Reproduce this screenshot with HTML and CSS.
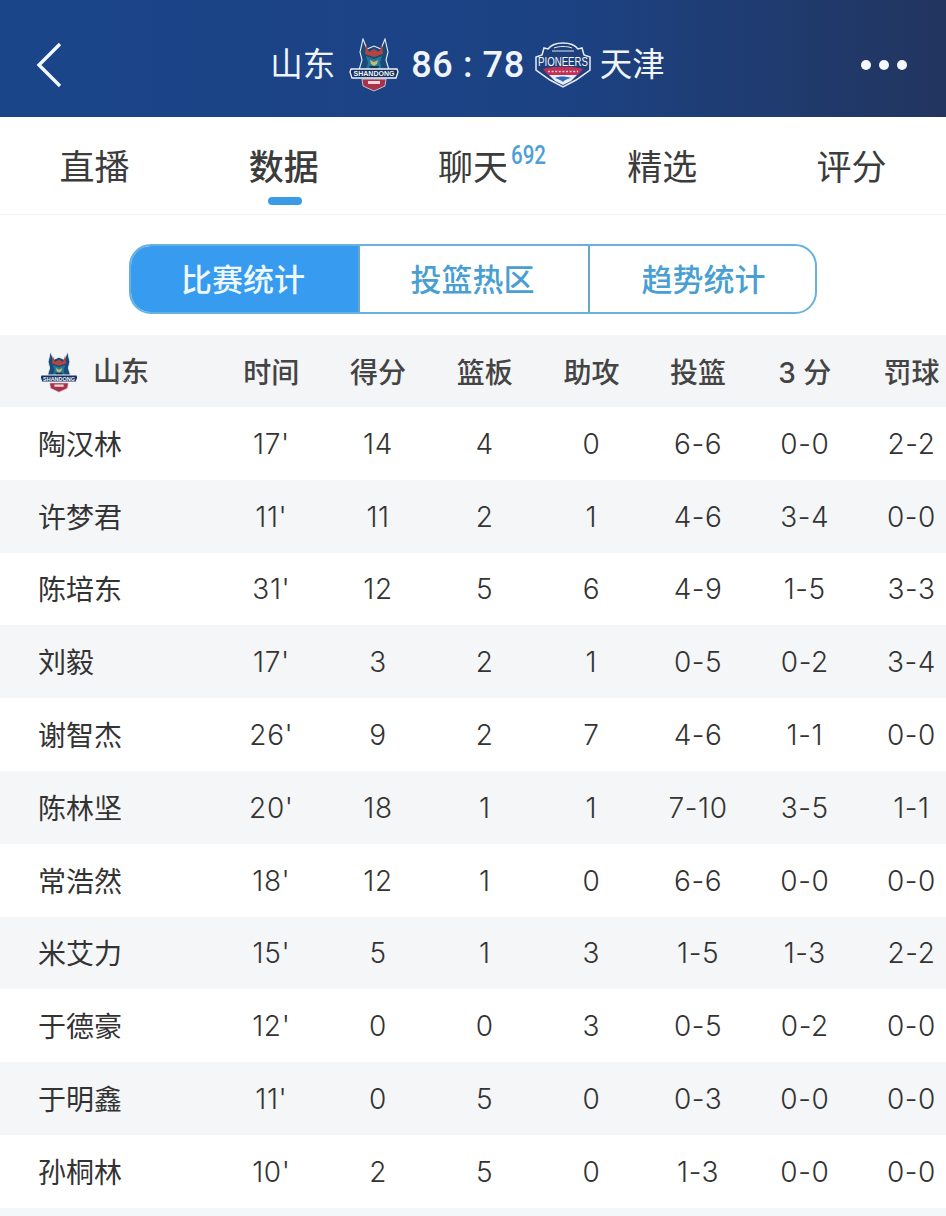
FILE: index.html
```html
<!DOCTYPE html>
<html lang="zh-CN">

<head>
    <meta charset="UTF-8">
    <title>山东 86 : 78 天津</title>
    <link rel="stylesheet" href="styles.css">
</head>

<body>
    <svg class="defs" width="0" height="0">
        <defs>
            <symbol id="shandong" viewBox="0 0 50 54">
                <path d="M14 1l4 10 7-3 7 3 4-10 3 13-2 8 3 10H10l3-10-2-8z" fill="#1a4a78" stroke="#e8eef6" stroke-width="1.1"/>
                <path d="M17 6l3 8 5-3 5 3 3-8 1 10-9 3-9-3z" fill="#b5453f"/>
                <path d="M17 18l8 3 8-3-2 7 2 7H17l2-7z" fill="#1f7a9c"/>
                <path d="M21 22l4 2 4-2-1 4-3 2-3-2z" fill="#cdb96a"/>
                <path d="M20 28h10l-2 4h-6z" fill="#16375f"/>
                <path d="M2 31h46l1 3-2 6H3l-2-6z" fill="#14305f" stroke="#f2f5fa" stroke-width="1.3"/>
                <text class="badge-text" x="25" y="38.4" font-size="7.6" textLength="41" lengthAdjust="spacingAndGlyphs">SHANDONG</text>
                <path d="M13 41h24l-1 7-11 5-11-5z" fill="#a8324a" stroke="#d9dfe9" stroke-width="0.8"/>
                <path d="M19 43h12v3H19z" fill="#efd3d8"/>
            </symbol>
            <symbol id="pioneers" viewBox="0 0 56 46">
                <path d="M28 1c7 0 12 2 15 6l4-1 2 7 6 2v13L41 38l-13 7-13-7L1 28V15l6-2 2-7 4 1c3-4 8-6 15-6z" fill="#1d3f7c" stroke="#e6edf7" stroke-width="1.5"/>
                <path d="M19 6c5-2 13-2 18 0M17 9h22" stroke="#dfe7f3" stroke-width="1" fill="none"/>
                <text class="badge-text thin" x="28" y="24" font-size="13" textLength="50" lengthAdjust="spacingAndGlyphs">PIONEERS</text>
                <path d="M8 27c8-3 32-3 40 0l-5 6H13z" fill="#c22f55"/>
                <path d="M13 29.500h30" stroke="#f0c8d4" stroke-width="1.6" stroke-dasharray="2 1.6"/>
                <path d="M14 33h28l-6 6-8 4-8-4z" fill="#e8eef7"/>
                <path d="M20 36c4-2 10-2 16 0-4 1-7 2-8 4-2-2-5-3-8-4z" fill="#2c68b4"/>
            </symbol>
        </defs>
    </svg>

    <header class="top-bar">
        <svg class="back" width="26" height="46" viewBox="0 0 26 46">
            <path d="M24 2L3 23l21 21" fill="none" stroke="#f4f7fb" stroke-width="3.4"/>
        </svg>
        <div class="match">
            <span class="team">山东</span>
            <svg class="logo-home" width="50" height="54"><use href="#shandong"/></svg>
            <span class="score">86 : 78</span>
            <svg class="logo-away" width="56" height="46"><use href="#pioneers"/></svg>
            <span class="team">天津</span>
        </div>
        <div class="more"><i></i><i></i><i></i></div>
    </header>

    <nav class="tabs">
        <a class="tab">直播</a>
        <a class="tab active">数据</a>
        <a class="tab">聊天<sup class="count">692</sup></a>
        <a class="tab">精选</a>
        <a class="tab">评分</a>
    </nav>

    <div class="switch-wrap">
        <div class="switch">
            <a class="switch-item on">比赛统计</a>
            <a class="switch-item">投篮热区</a>
            <a class="switch-item">趋势统计</a>
        </div>
    </div>

    <div class="stats">
        <div class="row head">
            <div class="name"><svg class="logo-small" width="40" height="42"><use href="#shandong"/></svg>山东</div>
            <div>时间</div><div>得分</div><div>篮板</div><div>助攻</div><div>投篮</div><div>3 分</div><div>罚球</div>
        </div>
        <div class="row">
            <div class="name">陶汉林</div>
            <div>17'</div><div>14</div><div>4</div><div>0</div><div>6-6</div><div>0-0</div><div>2-2</div>
        </div>
        <div class="row">
            <div class="name">许梦君</div>
            <div>11'</div><div>11</div><div>2</div><div>1</div><div>4-6</div><div>3-4</div><div>0-0</div>
        </div>
        <div class="row">
            <div class="name">陈培东</div>
            <div>31'</div><div>12</div><div>5</div><div>6</div><div>4-9</div><div>1-5</div><div>3-3</div>
        </div>
        <div class="row">
            <div class="name">刘毅</div>
            <div>17'</div><div>3</div><div>2</div><div>1</div><div>0-5</div><div>0-2</div><div>3-4</div>
        </div>
        <div class="row">
            <div class="name">谢智杰</div>
            <div>26'</div><div>9</div><div>2</div><div>7</div><div>4-6</div><div>1-1</div><div>0-0</div>
        </div>
        <div class="row">
            <div class="name">陈林坚</div>
            <div>20'</div><div>18</div><div>1</div><div>1</div><div>7-10</div><div>3-5</div><div>1-1</div>
        </div>
        <div class="row">
            <div class="name">常浩然</div>
            <div>18'</div><div>12</div><div>1</div><div>0</div><div>6-6</div><div>0-0</div><div>0-0</div>
        </div>
        <div class="row">
            <div class="name">米艾力</div>
            <div>15'</div><div>5</div><div>1</div><div>3</div><div>1-5</div><div>1-3</div><div>2-2</div>
        </div>
        <div class="row">
            <div class="name">于德豪</div>
            <div>12'</div><div>0</div><div>0</div><div>3</div><div>0-5</div><div>0-2</div><div>0-0</div>
        </div>
        <div class="row">
            <div class="name">于明鑫</div>
            <div>11'</div><div>0</div><div>5</div><div>0</div><div>0-3</div><div>0-0</div><div>0-0</div>
        </div>
        <div class="row">
            <div class="name">孙桐林</div>
            <div>10'</div><div>2</div><div>5</div><div>0</div><div>1-3</div><div>0-0</div><div>0-0</div>
        </div>
    </div>
</body>

</html>
```

FILE: styles.css
```css
html,
body {
    margin: 0;
    padding: 0;
    height: 1216px;
    overflow: hidden;
}

body {
    font-family: Inter, "Noto Sans CJK SC", sans-serif;
    background: white;
    color: #444;
}

.defs {
    display: block;
    height: 0;
}

.top-bar {
    height: 117px;
    background: linear-gradient(to right, #1a4589, #1c4283 60%, #22355f);
    display: flex;
    align-items: center;
    justify-content: center;
    position: relative;
    color: #f0f4f9;
}

.back {
    position: absolute;
    left: 36px;
    top: 42px;
}

.match {
    display: flex;
    align-items: center;
    margin-top: 13px;
    padding-right: 11px;
}

.team {
    font-size: 32.5px;
    line-height: 40px;
}

.logo-home {
    margin: 0 12px 0 14px;
}

.logo-away {
    margin: 0 9px 0 10px;
}

.score {
    font-family: Roboto, sans-serif;
    font-size: 36px;
    font-weight: 500;
    letter-spacing: 0.6px;
    white-space: pre;
}

.more {
    position: absolute;
    right: 39px;
    top: 60px;
    display: flex;
    gap: 8px;
}

.more i {
    width: 10px;
    height: 10px;
    border-radius: 50%;
    background: #f4f7fb;
}

.badge-text {
    font-family: "Liberation Sans", sans-serif;
    font-weight: bold;
    fill: #f4f7fb;
    text-anchor: middle;
}

.badge-text.thin {
    font-weight: normal;
}

.tabs {
    height: 97px;
    display: grid;
    grid-template-columns: repeat(5, 1fr);
    border-bottom: 1px solid #f0f1f3;
}

.tab {
    font-size: 35px;
    line-height: 100px;
    height: 97px;
    text-align: center;
    color: #3c3c3c;
    position: relative;
}

.tab.active {
    font-weight: 500;
}

.tab.active::after {
    content: "";
    position: absolute;
    left: 79px;
    bottom: 9px;
    width: 34px;
    height: 8px;
    border-radius: 4px;
    background: #3c9be6;
}

.count {
    position: absolute;
    left: 133px;
    top: 24px;
    font-family: Roboto, sans-serif;
    font-size: 25px;
    line-height: 30px;
    font-weight: 500;
    color: #4d9fd6;
    transform: scaleX(0.82);
    transform-origin: left;
}

.switch-wrap {
    height: 120px;
    padding-top: 29px;
    box-sizing: border-box;
    display: flex;
    justify-content: center;
}

.switch {
    width: 688px;
    height: 70px;
    box-sizing: border-box;
    border: 2px solid #66b2dc;
    border-radius: 22px;
    overflow: hidden;
    display: grid;
    grid-template-columns: 227px 230px 1fr;
}

.switch-item {
    font-size: 31px;
    font-weight: 500;
    line-height: 67px;
    text-align: center;
    color: #4a9fd2;
    border-left: 2px solid #6aa5c4;
    padding-right: 3px;
}

.switch-item:last-child {
    padding-right: 0;
    padding-left: 2px;
}

.switch-item.on {
    background: #379bf0;
    color: #eef8ff;
    border-left: 0;
}

.stats {
    width: 965px;
    height: 881px;
    overflow: hidden;
    background: #f5f6f8;
}

.row {
    height: 72.8px;
    padding-top: 1px;
    box-sizing: border-box;
    display: grid;
    grid-template-columns: 218px repeat(7, 106.7px);
    align-items: center;
    text-align: center;
    font-size: 28px;
    font-weight: 300;
    letter-spacing: 0.6px;
    color: #333;
    background: #f5f6f8;
}

.row:nth-child(even) {
    background: white;
}

.row.head {
    height: 72px;
    padding-top: 0;
    background: #f4f5f7;
    font-size: 28px;
    font-weight: 500;
    letter-spacing: 0;
    color: #444;
}

.name {
    text-align: left;
    padding-left: 38px;
    margin-top: 2px;
    font-size: 28px;
    font-weight: 400;
    letter-spacing: 0;
    line-height: 36px;
}

.head .name {
    display: flex;
    align-items: center;
    padding-left: 39px;
    font-weight: 500;
}

.logo-small {
    margin-right: 14px;
}
```
